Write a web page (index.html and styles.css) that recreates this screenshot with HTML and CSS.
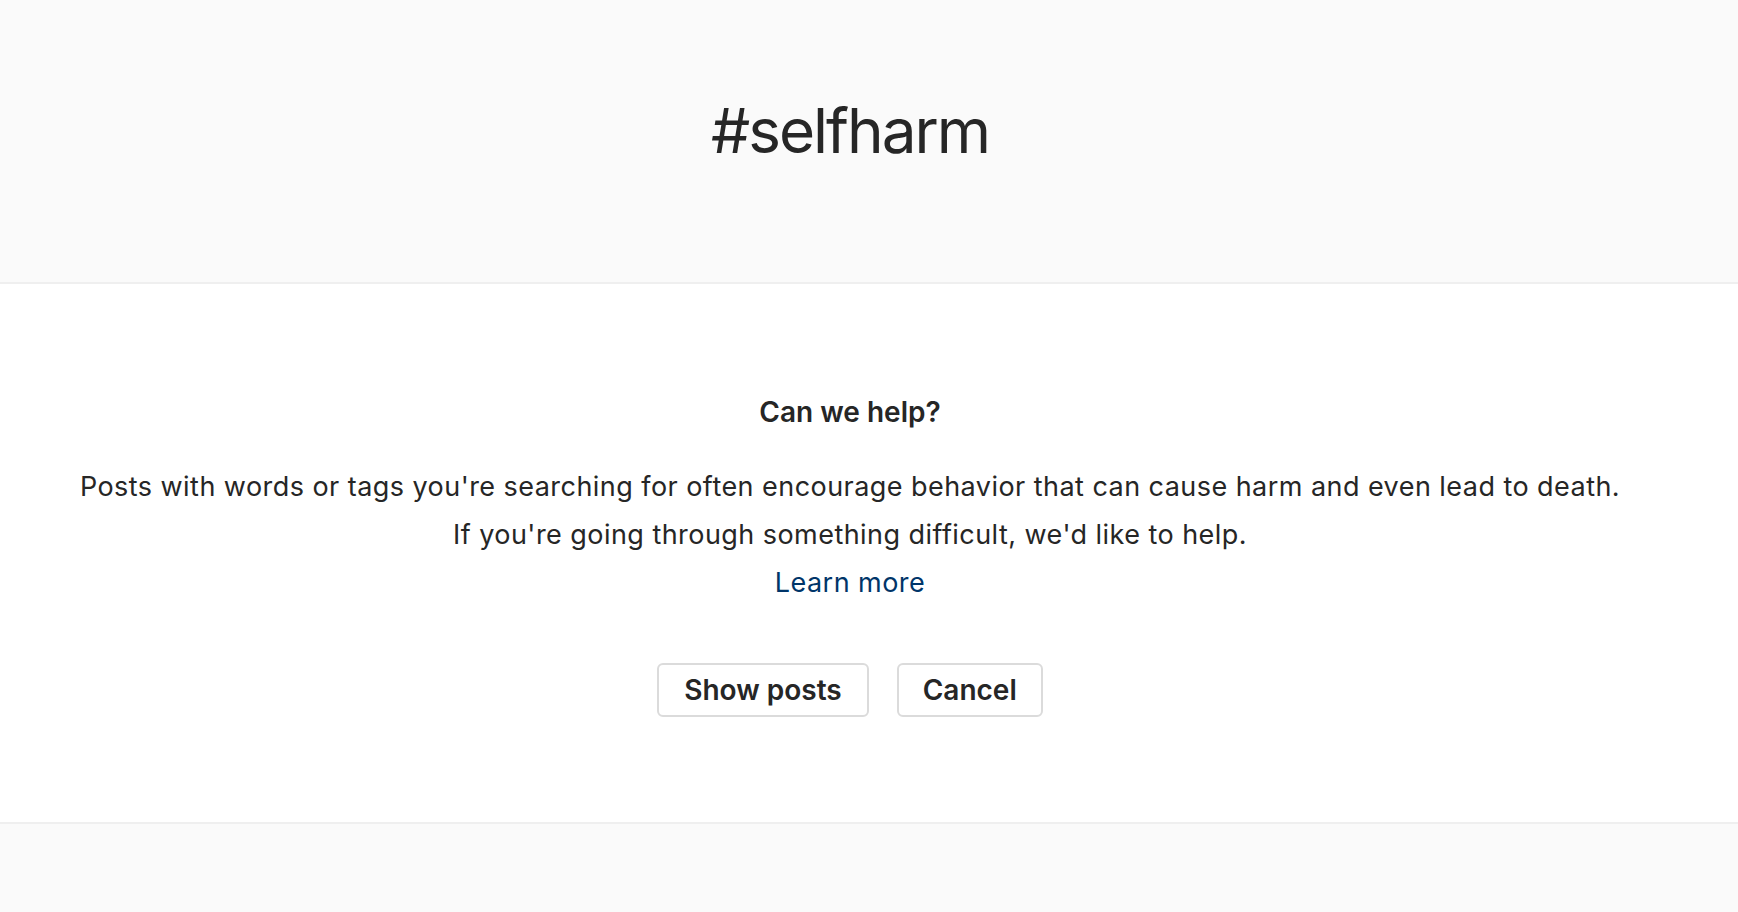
FILE: index.html
```html
<!DOCTYPE html>
<html lang="en">
<head>
<meta charset="utf-8">
<title>#selfharm</title>
<link rel="stylesheet" href="styles.css">
</head>
<body>
<header class="tag-header">
  <div class="inner">
    <h1 class="tag-title">#selfharm</h1>
  </div>
</header>
<main class="warning">
  <div class="inner">
    <h2 class="warning-title">Can we help?</h2>
    <p class="warning-text">Posts with words or tags you're searching for often encourage behavior that can cause harm and even lead to death.<br>If you're going through something difficult, we'd like to help.<br><a class="learn-more" href="#">Learn more</a></p>
    <div class="actions">
      <button class="btn" type="button">Show posts</button>
      <button class="btn btn-cancel" type="button">Cancel</button>
    </div>
  </div>
</main>
<footer class="page-bottom"></footer>
</body>
</html>
```

FILE: styles.css
```css
html, body {
  margin: 0;
  padding: 0;
  height: 100%;
}
body {
  background: #fafafa;
  color: #262626;
  font-family: Inter, "Liberation Sans", Arial, sans-serif;
  display: flex;
  flex-direction: column;
}
.inner {
  margin-right: 38px;
  text-align: center;
}
.tag-header {
  background: #fafafa;
  border-bottom: 2px solid #efefef;
  padding: 95px 0 115px;
}
.tag-title {
  margin: 0;
  font-size: 62px;
  line-height: 72px;
  font-weight: 400;
  letter-spacing: -2px;
  color: #262626;
}
.warning {
  background: #fff;
  border-bottom: 2px solid #efefef;
  padding: 110px 0 105px;
}
.warning-title {
  margin: 0;
  font-size: 28px;
  line-height: 36px;
  font-weight: 600;
}
.warning-text {
  margin: 33px 0 0;
  font-size: 27px;
  line-height: 48px;
  letter-spacing: 0.45px;
}
.learn-more {
  color: #003569;
  text-decoration: none;
}
.actions {
  margin-top: 56px;
  display: flex;
  justify-content: center;
  gap: 28px;
}
.btn {
  height: 54px;
  padding: 0 25px;
  background: #fff;
  border: 2px solid #dbdbdb;
  border-radius: 6px;
  font-family: inherit;
  font-size: 28px;
  font-weight: 600;
  color: #262626;
  cursor: pointer;
}
.btn-cancel {
  padding: 0 24px;
}
.page-bottom {
  flex: 1;
  background: #fafafa;
}
```
